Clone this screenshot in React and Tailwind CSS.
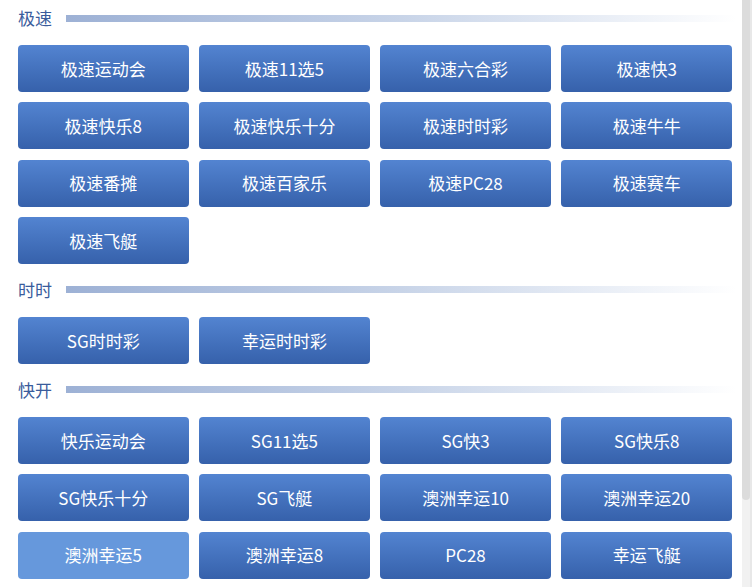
import React from "react";

const sections = [
  {
    title: "极速",
    items: [
      "极速运动会", "极速11选5", "极速六合彩", "极速快3",
      "极速快乐8", "极速快乐十分", "极速时时彩", "极速牛牛",
      "极速番摊", "极速百家乐", "极速PC28", "极速赛车",
      "极速飞艇",
    ],
  },
  { title: "时时", items: ["SG时时彩", "幸运时时彩"] },
  {
    title: "快开",
    items: [
      "快乐运动会", "SG11选5", "SG快3", "SG快乐8",
      "SG快乐十分", "SG飞艇", "澳洲幸运10", "澳洲幸运20",
      "澳洲幸运5", "澳洲幸运8", "PC28", "幸运飞艇",
    ],
  },
];

function Header({ title }) {
  return (
    <div className="flex items-center h-[20px]">
      <span className="text-[17px] leading-[20px] text-[#3a5c9c] w-[48px] shrink-0">{title}</span>
      <div className="h-[7px] flex-1 bg-gradient-to-r from-[#9db1d5] via-[#c8d4e8] to-[#ffffff]" />
    </div>
  );
}

function Btn({ label, active }) {
  return (
    <div
      className={
        "h-[47px] rounded-[4px] flex items-center justify-center text-white text-[17px] " +
        (active
          ? "bg-[#6698dc]"
          : "bg-gradient-to-b from-[#5384d1] to-[#3661ab]")
      }
    >
      {label}
    </div>
  );
}

export default function App() {
  return (
    <div
      className="w-[752px] h-[587px] overflow-hidden flex bg-white"
      style={{ fontFamily: '"Noto Sans CJK SC", "Noto Sans", sans-serif' }}
    >
      <div className="w-[742px] shrink-0 pl-[18px] pr-[6px] pt-[8px] flex flex-col gap-[16px]">
        {sections.map((s) => (
          <div key={s.title} className="flex flex-col gap-[17px]">
            <Header title={s.title} />
            <div className="grid grid-cols-4 gap-x-[10.67px] gap-y-[10.33px] w-[714px]">
              {s.items.map((it) => (
                <Btn key={it} label={it} active={it === "澳洲幸运5"} />
              ))}
            </div>
          </div>
        ))}
      </div>
      <div className="w-[10px] h-full bg-[#f1f1f1] flex">
        <div className="w-[8px] h-[500px] bg-[#dcdcdc] rounded-b-[4px]" />
        <div className="w-[2px] h-full bg-[#e8e8e8]" />
      </div>
    </div>
  );
}
